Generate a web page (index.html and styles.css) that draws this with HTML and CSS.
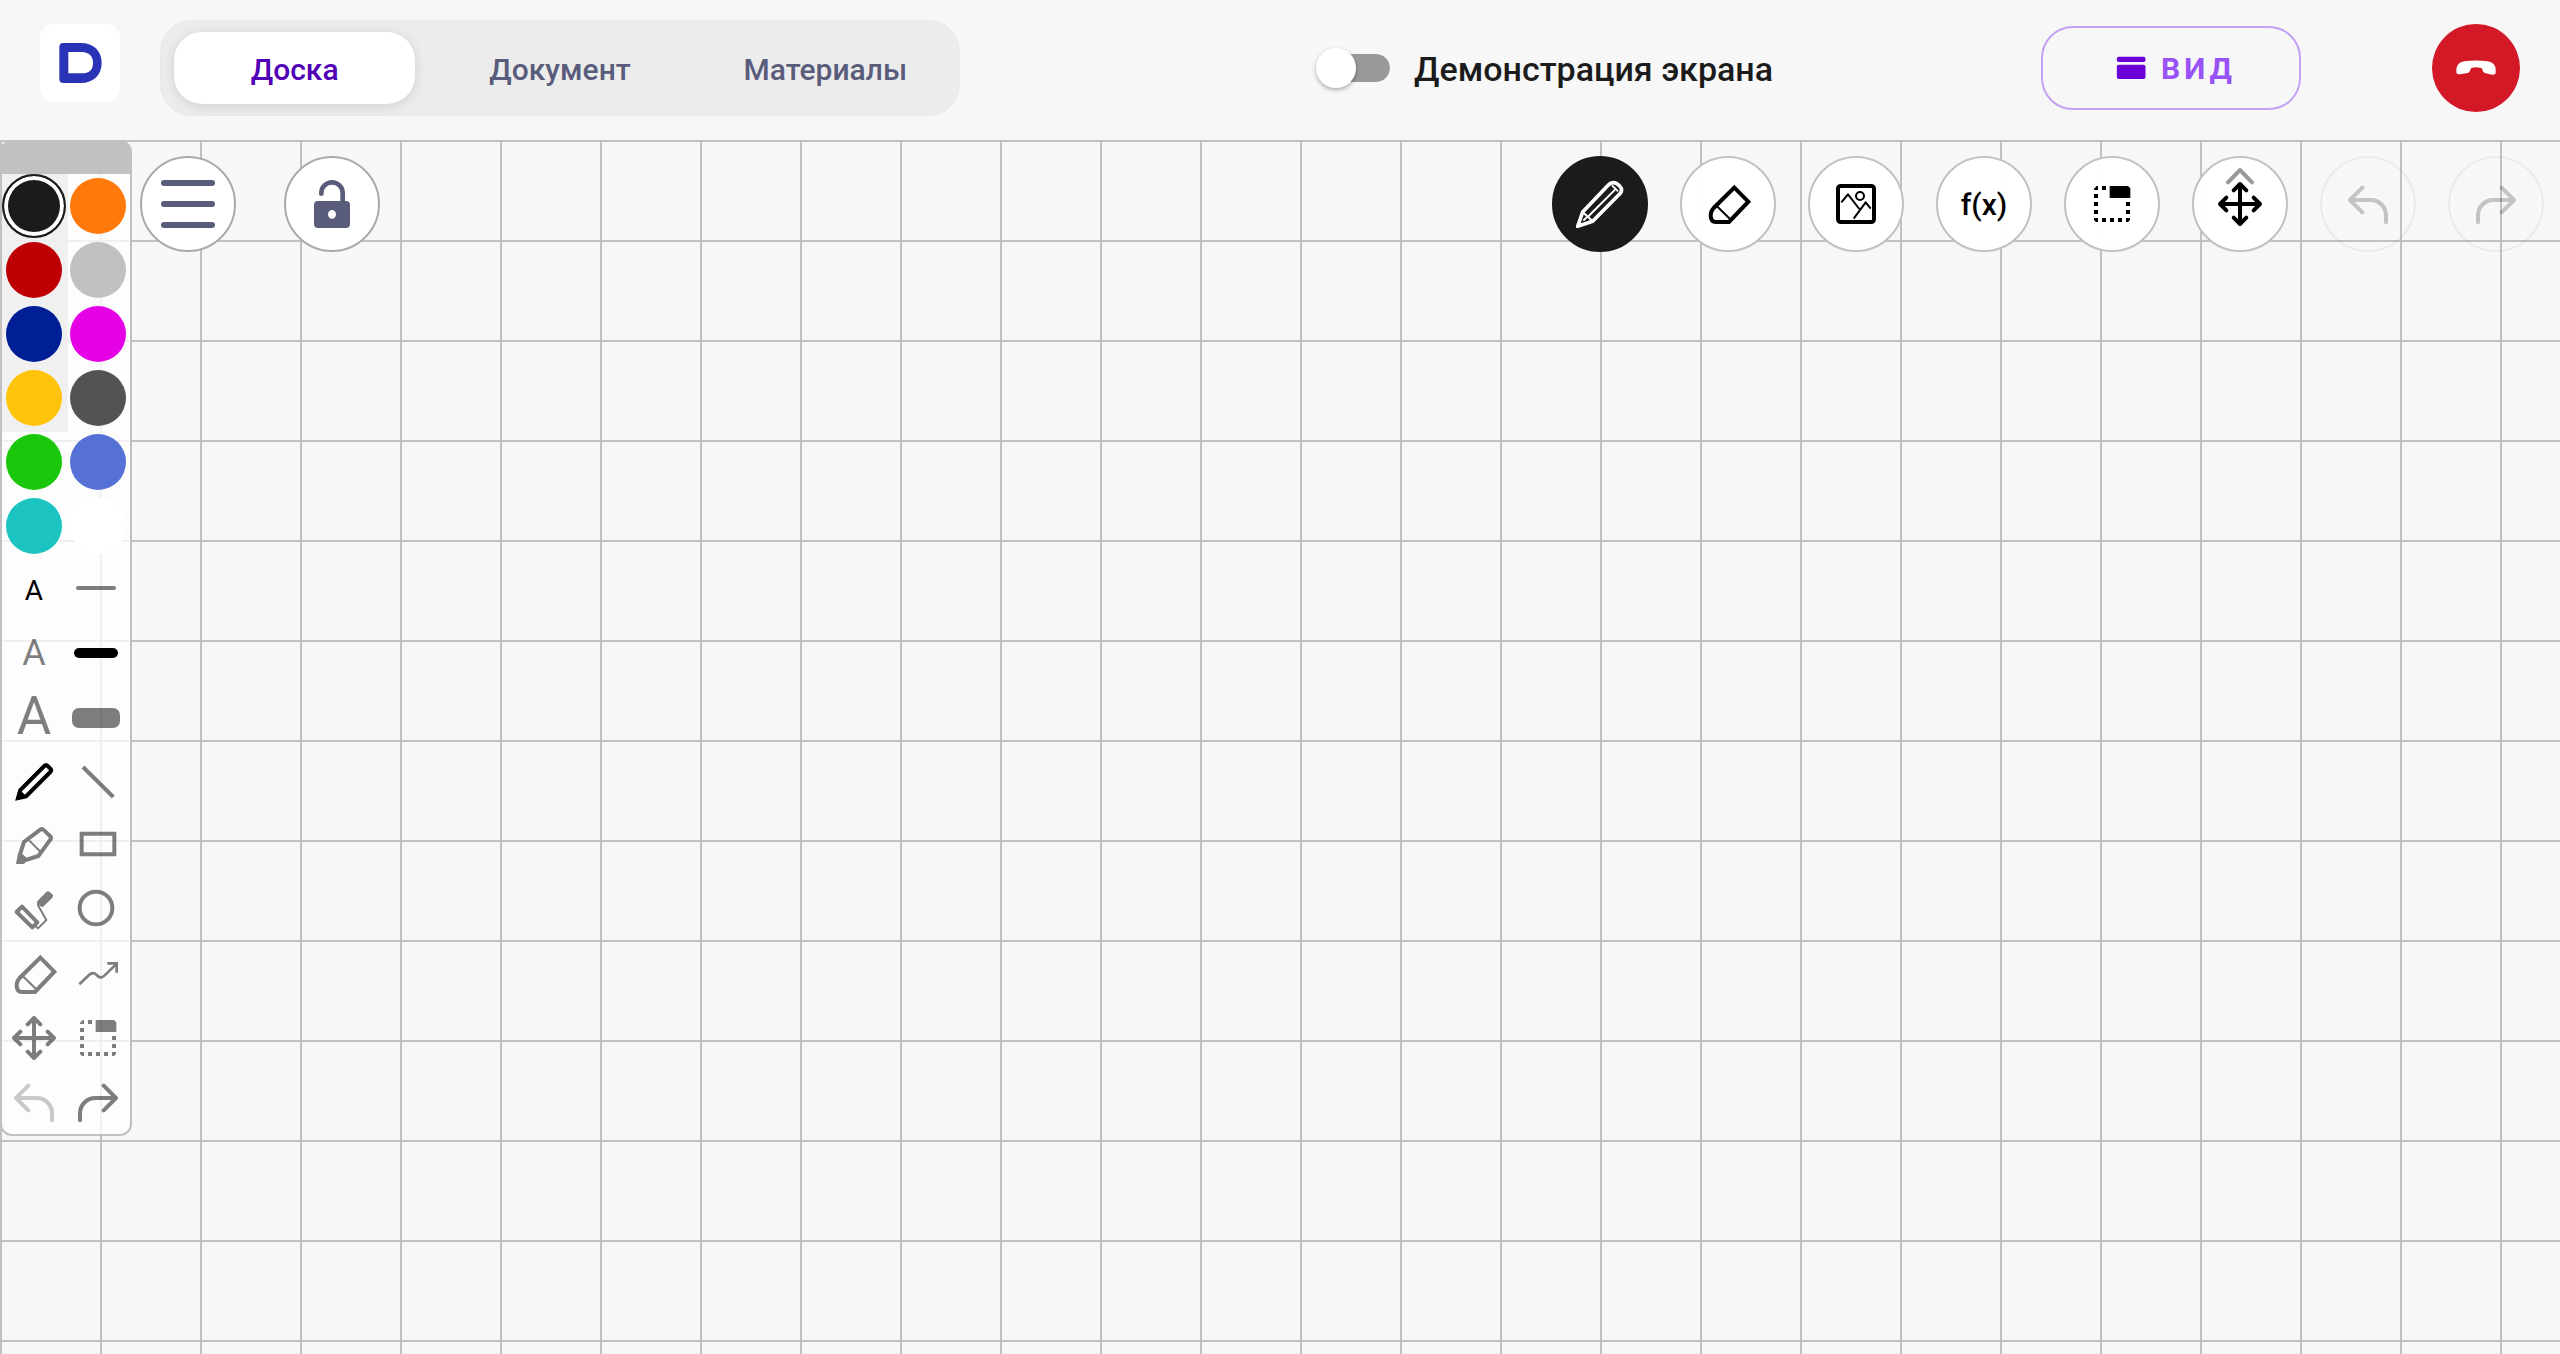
FILE: index.html
```html
<!DOCTYPE html>
<html lang="ru">
<head>
<meta charset="utf-8">
<title>Доска</title>
<meta name="viewport" content="width=device-width, initial-scale=1">
<link rel="stylesheet" href="styles.css">
</head>
<body>
<svg class="sprite" aria-hidden="true">
  <symbol id="move" viewBox="-72 -72 144 144"><path class="line" d="M0-60V60M-60 0H60M-19-41L0-60L19-41M-19 41L0 60L19 41M-41-19L-60 0L-41 19M41-19L60 0L41 19"/></symbol>
  <symbol id="eraser" viewBox="-72 -72 144 144"><path class="line miter" d="M19-49L61-7L3 54H-36Q-52 54-52 34Q-52 22-43 12Z"/><path class="line thin" d="M-34 6L7 46"/></symbol>
  <symbol id="select" viewBox="-72 -72 144 144"><path fill="currentColor" d="M-7-54H48L55-47V-18H-7Z"/><path fill="currentColor" d="M-54-46L-46-54H-42V-42H-54ZM-30-54h12v12h-12ZM-54-30h12v12h-12ZM-54-6h12v12h-12ZM-54 18h12v12h-12ZM-54 42h12v12h-6l-6-6ZM-30 42h12v12h-12ZM-6 42h12v12h-12ZM18 42h12v12h-12ZM42 42h12v6l-6 6h-6ZM42 18h12v12h-12ZM42-6h12v12h-12Z"/></symbol>
  <symbol id="undo" viewBox="-72 -72 144 144"><path class="line" d="M-17-49L-54-12L-17 25M-54-12H8A46 46 0 0 1 54 34V55"/></symbol>
  <symbol id="redo" viewBox="-72 -72 144 144"><path class="line" d="M17-49L54-12L17 25M54-12H-8A46 46 0 0 0-54 34V55"/></symbol>
</svg>

<header class="header">
  <a class="logo" href="#" aria-label="Главная"><svg class="logo-mark" viewBox="0 0 129 120"><path fill="#2a33b6" fill-rule="evenodd" d="M13 0H65C105 0 128 24 128 60S104 120 65 120H13Q1 120 1 108V12Q1 0 13 0ZM28 27V91H68Q102 91 102 60T68 27Z"/></svg></a>
  <nav class="tabs">
    <button class="tab active" type="button">Доска</button>
    <button class="tab" type="button">Документ</button>
    <button class="tab" type="button">Материалы</button>
  </nav>
  <label class="share"><input class="switch" type="checkbox" role="switch"><span class="share-text">Демонстрация экрана</span></label>
  <button class="view" type="button"><svg class="view-icon" viewBox="0 0 87 72"><rect x="1" y="2" width="86" height="16" rx="6"/><rect x="1" y="26" width="86" height="43" rx="6"/></svg>ВИД</button>
  <button class="hangup" type="button" aria-label="Завершить звонок"><svg class="icon" viewBox="-72 -72 144 144"><path fill="#fff" d="M-59 6Q-58-16-36-20Q0-25 35-20Q59-16 59 6V14Q59 22 48 20L30 16Q21 15 20 7Q20 0 11-1Q0-3-11-1Q-18 1-18 8Q-19 14-25 15L-48 19Q-59 20-59 12Z"/></svg></button>
</header>

<main class="board">
  <aside class="palette">
    <div class="grip"></div>
    <div class="cells">
      <button class="cell" type="button" aria-label="Чёрный"><span class="swatch black"></span></button>
      <button class="cell" type="button" aria-label="Оранжевый"><span class="swatch orange"></span></button>
      <button class="cell" type="button" aria-label="Красный"><span class="swatch red"></span></button>
      <button class="cell" type="button" aria-label="Серый"><span class="swatch silver"></span></button>
      <button class="cell" type="button" aria-label="Синий"><span class="swatch blue"></span></button>
      <button class="cell" type="button" aria-label="Пурпурный"><span class="swatch magenta"></span></button>
      <button class="cell" type="button" aria-label="Жёлтый"><span class="swatch yellow"></span></button>
      <button class="cell" type="button" aria-label="Тёмно-серый"><span class="swatch dark"></span></button>
      <button class="cell" type="button" aria-label="Зелёный"><span class="swatch green"></span></button>
      <button class="cell" type="button" aria-label="Голубой"><span class="swatch sky"></span></button>
      <button class="cell" type="button" aria-label="Бирюзовый"><span class="swatch teal"></span></button>
      <button class="cell" type="button" aria-label="Белый"><span class="swatch white"></span></button>
      <button class="cell letter small on" type="button">A</button>
      <button class="cell" type="button" aria-label="Тонкая линия"><svg class="icon" viewBox="-72 -72 144 144"><rect x="-66" y="-12" width="120" height="12" rx="6"/></svg></button>
      <button class="cell letter medium" type="button">A</button>
      <button class="cell on" type="button" aria-label="Средняя линия"><svg class="icon" viewBox="-72 -72 144 144"><rect x="-72" y="-18" width="132" height="30" rx="15"/></svg></button>
      <button class="cell letter large" type="button">A</button>
      <button class="cell" type="button" aria-label="Толстая линия"><svg class="icon" viewBox="-72 -72 144 144"><rect x="-78" y="-30" width="144" height="60" rx="21"/></svg></button>
      <button class="cell on" type="button" aria-label="Карандаш"><svg class="icon" viewBox="-72 -72 144 144"><path class="line miter" d="M31-48Q36-53 41-48L49-40Q54-35 49-30L-24 43L-48 48L-41 24Z"/><path fill="currentColor" d="M-54 54L-47 24L-40 22L-36 30L-26 40L-28 48Z"/></svg></button>
      <button class="cell" type="button" aria-label="Прямая"><svg class="icon" viewBox="-72 -72 144 144"><path class="line butt" d="M-45-45L46 45"/></svg></button>
      <button class="cell" type="button" aria-label="Маркер"><svg class="icon" viewBox="-72 -72 144 144"><path class="line miter" d="M19-49Q24-53 28-49L49-29Q53-24 49-19L13 30L-24 42L-42 25L-30-12Z"/><path class="line thin" d="M-14-16L20 18"/><path fill="currentColor" d="M-54 54L-48 22L-22 44L-30 54Z"/></svg></button>
      <button class="cell" type="button" aria-label="Прямоугольник"><svg class="icon" viewBox="-72 -72 144 144"><path class="line miter" d="M-49-37H49V25H-49Z"/></svg></button>
      <button class="cell" type="button" aria-label="Заливка"><svg class="icon" viewBox="-72 -72 144 144"><path class="line" d="M-36-10L-52 6L-5 52L10 37Z"/><path class="line thin" d="M12-20V-14L37 30L12 55L4 48"/><path fill="currentColor" d="M11-28L37-54Q42-59 47-54L55-47Q59-42 55-37L29-11Q24-7 20-11L11-19Q7-24 11-28Z"/></svg></button>
      <button class="cell" type="button" aria-label="Окружность"><svg class="icon" viewBox="-72 -72 144 144"><circle class="line" cx="-6" cy="-6" r="49"/></svg></button>
      <button class="cell" type="button" aria-label="Ластик"><svg class="icon"><use href="#eraser"/></svg></button>
      <button class="cell" type="button" aria-label="Ломаная"><svg class="icon" viewBox="-72 -72 144 144"><path class="line wave" d="M-56 31L-27 3Q-15-8-5 2Q7 17 20 4L54-29M28-32H56V-4"/></svg></button>
      <button class="cell" type="button" aria-label="Перемещение"><svg class="icon"><use href="#move"/></svg></button>
      <button class="cell" type="button" aria-label="Выделение"><svg class="icon"><use href="#select"/></svg></button>
      <button class="cell off" type="button" aria-label="Отменить"><svg class="icon"><use href="#undo"/></svg></button>
      <button class="cell" type="button" aria-label="Повторить"><svg class="icon"><use href="#redo"/></svg></button>
    </div>
  </aside>

  <div class="side-tools">
    <button class="round slate" type="button" aria-label="Меню"><svg class="icon wide" viewBox="-96 -96 192 192"><path class="line bar" d="M-72-63H72M-72 0H72M-72 63H72"/></svg></button>
    <button class="round slate" type="button" aria-label="Заблокировать доску"><svg class="icon" viewBox="-72 -72 144 144"><path class="line shackle" d="M-32-31V-33A32 32 0 0 1 32-33V0"/><path fill="currentColor" fill-rule="evenodd" d="M-42-9H42Q54-9 54 3V60Q54 72 42 72H-42Q-54 72-54 60V3Q-54-9-42-9ZM0 18A12 13 0 1 0 0 44A12 13 0 1 0 0 18Z"/></svg></button>
  </div>

  <div class="tools">
    <button class="round selected" type="button" aria-label="Карандаш"><svg class="icon" viewBox="-72 -72 144 144"><path class="line pen" d="M25-57Q35-68 49-62Q60-56 64-47Q67-37 58-29L-22 52L-67 67L-52 24Z"/><path class="line rib" d="M-34 36L49-47M-52 24L-22 52M-50 50L-36 36M36-56L54-38"/></svg></button>
    <button class="round" type="button" aria-label="Ластик"><svg class="icon"><use href="#eraser"/></svg></button>
    <button class="round" type="button" aria-label="Изображение"><svg class="icon" viewBox="-72 -72 144 144"><rect class="line" x="-54" y="-54" width="108" height="108" rx="8"/><path class="line thin" d="M-44-5L-24-29L10 15M-7 44L29-5L44 14"/><circle class="line thin" cx="12" cy="-24" r="12"/></svg></button>
    <button class="round formula" type="button">f(x)</button>
    <button class="round" type="button" aria-label="Выделение"><svg class="icon"><use href="#select"/></svg></button>
    <button class="round" type="button" aria-label="Перемещение"><svg class="icon" viewBox="-72 -72 144 144"><path class="line chevron" d="M-36-65L0-102L36-65"/><use href="#move" x="-72" y="-72" width="144" height="144"/></svg></button>
    <button class="round disabled" type="button" aria-label="Отменить" disabled><svg class="icon"><use href="#undo"/></svg></button>
    <button class="round disabled" type="button" aria-label="Повторить" disabled><svg class="icon"><use href="#redo"/></svg></button>
  </div>
</main>
</body>
</html>
```
FILE: styles.css
```css
* { box-sizing: border-box; }

body {
  margin: 0;
  min-height: 100vh;
  display: flex;
  flex-direction: column;
  background: #f7f7f7;
  color: #1b1b1b;
  font-family: Roboto, "Noto Sans", sans-serif;
}

button {
  margin: 0;
  padding: 0;
  border: 0;
  background: none;
  color: inherit;
  font: inherit;
  cursor: pointer;
}

.sprite { position: absolute; width: 0; height: 0; }

.icon { width: 48px; height: 48px; overflow: visible; fill: currentColor; flex: none; }
.icon.wide { width: 64px; height: 64px; }
.line { fill: none; stroke: currentColor; stroke-width: 12; stroke-linecap: round; stroke-linejoin: round; }
.miter { stroke-linejoin: miter; }
.butt { stroke-linecap: butt; }
.thin { stroke-width: 6; stroke-linecap: butt; }
.wave { stroke-width: 8; stroke-linejoin: miter; stroke-linecap: butt; }
.pen { stroke-width: 11; }
.rib { stroke-width: 6; stroke-linecap: butt; }
.bar { stroke-width: 18; }
.shackle { stroke-width: 14; }
.chevron { stroke: #999; }

/* Header */
.header {
  display: flex;
  align-items: center;
  height: 140px;
  padding: 0 40px 4px 40px;
}

.logo {
  display: flex;
  align-items: center;
  justify-content: center;
  width: 80px;
  height: 78px;
  margin: 0 40px 10px 0;
  border-radius: 14px;
  background: #fff;
}
.logo-mark { width: 43px; height: 40px; }

.tabs {
  display: grid;
  grid-template-columns: repeat(3, 1fr);
  flex: 0 1 800px;
  height: 96px;
  border: 2px solid #eaeaea;
  border-radius: 32px;
  background: #ececec;
}
.tab {
  margin: 10px 12px;
  padding-top: 2px;
  border-radius: 28px;
  color: #5a5c7b;
  font-size: 30px;
  font-weight: 500;
}
.tab.active {
  background: #fff;
  color: #5100b5;
  box-shadow: 0 2px 12px rgba(0, 0, 0, .12);
}

.share {
  display: flex;
  align-items: center;
  gap: 24px;
  flex: 0 0 464px;
  margin-left: auto;
  margin-right: 261px;
  font-size: 34px;
  font-weight: 500;
  white-space: nowrap;
}
.share-text { padding-top: 2px; }
.switch {
  appearance: none;
  flex: none;
  width: 74px;
  height: 28px;
  margin: 0;
  border-left: 6px solid transparent;
  border-radius: 14px;
  background: #999;
  background-clip: padding-box;
}
.switch::before {
  content: "";
  display: block;
  width: 40px;
  height: 40px;
  margin: -6px 0 0 -6px;
  border-radius: 50%;
  background: #fff;
  box-shadow: 0 2px 4px rgba(0, 0, 0, .3);
}

.view {
  display: flex;
  align-items: center;
  justify-content: center;
  gap: 15px;
  width: 260px;
  height: 84px;
  margin-right: 131px;
  padding-left: 10px;
  border: 2px solid #c5a1f5;
  border-radius: 32px;
  color: #9852f5;
  font-size: 30px;
  font-weight: 700;
  letter-spacing: 4px;
}
.view-icon { width: 30px; height: 24px; fill: #6a00d6; }

.hangup {
  display: flex;
  align-items: center;
  justify-content: center;
  width: 88px;
  height: 88px;
  border-radius: 50%;
  background: #d21925;
}

/* Board */
.board {
  flex: 1;
  display: flex;
  align-items: flex-start;
  gap: 8px;
  padding-right: 16px;
  background-image:
    linear-gradient(#c1c1c1 2px, transparent 2px),
    linear-gradient(90deg, #c1c1c1 2px, transparent 2px);
  background-size: 100px 100px;
}

.palette {
  width: 132px;
  margin-bottom: 16px;
  border: 2px solid #c1c1c1;
  border-radius: 12px;
  background: rgba(255, 255, 255, .75);
  background-clip: padding-box;
}
.grip { height: 32px; border-radius: 8px 8px 0 0; background: #c1c1c1; }
.cells {
  display: grid;
  grid-template-columns: 1fr 1fr;
  grid-auto-rows: 64px;
  background: linear-gradient(rgba(237, 237, 237, .8), rgba(237, 237, 237, .8)) no-repeat 0 0 / 66px 258px;
}
.cell {
  display: flex;
  align-items: center;
  justify-content: center;
  color: rgba(0, 0, 0, .5);
}
.cell .icon { color: #000; opacity: .5; }
.cell.on { color: #000; }
.cell.on .icon { opacity: 1; }
.cell.off .icon { opacity: .2; }

.letter { font-weight: 400; line-height: 1; }
.small { padding-top: 2px; font-size: 28px; }
.medium { padding-bottom: 2px; font-size: 36px; }
.large { padding-bottom: 4px; font-size: 53px; }

.swatch { width: 56px; height: 56px; border-radius: 50%; }
.black {
  width: 64px;
  height: 64px;
  border: 2px solid #1b1b1b;
  background: #1b1b1b;
  box-shadow: inset 0 0 0 4px #fff;
}
.orange { background: #ff780a; }
.red { background: #be0005; }
.silver { background: #c1c1c1; }
.blue { background: #001e96; }
.magenta { background: #e600e6; }
.yellow { background: #ffc30a; }
.dark { background: #535353; }
.green { background: #1bc70a; }
.sky { background: #5571d5; }
.teal { background: #1bc3c1; }
.white { background: #fff; }

.side-tools, .tools { display: flex; padding-top: 16px; }
.side-tools { gap: 48px; }
.tools { gap: 32px; margin-left: auto; }

.round {
  display: flex;
  align-items: center;
  justify-content: center;
  width: 96px;
  height: 96px;
  border: 2px solid #c1c1c1;
  border-radius: 50%;
  background: rgba(255, 255, 255, .96);
  color: #000;
}
.round.slate { border-color: #aaa; background: #fff; color: #5a5c7b; }
.round.selected { border-color: #1b1b1b; background: #1b1b1b; color: #fff; }
.round.disabled { border-color: rgba(0, 0, 0, .05); background: none; }
.round.disabled .icon { opacity: .2; }
.formula { font-size: 30px; font-weight: 500; }
```
